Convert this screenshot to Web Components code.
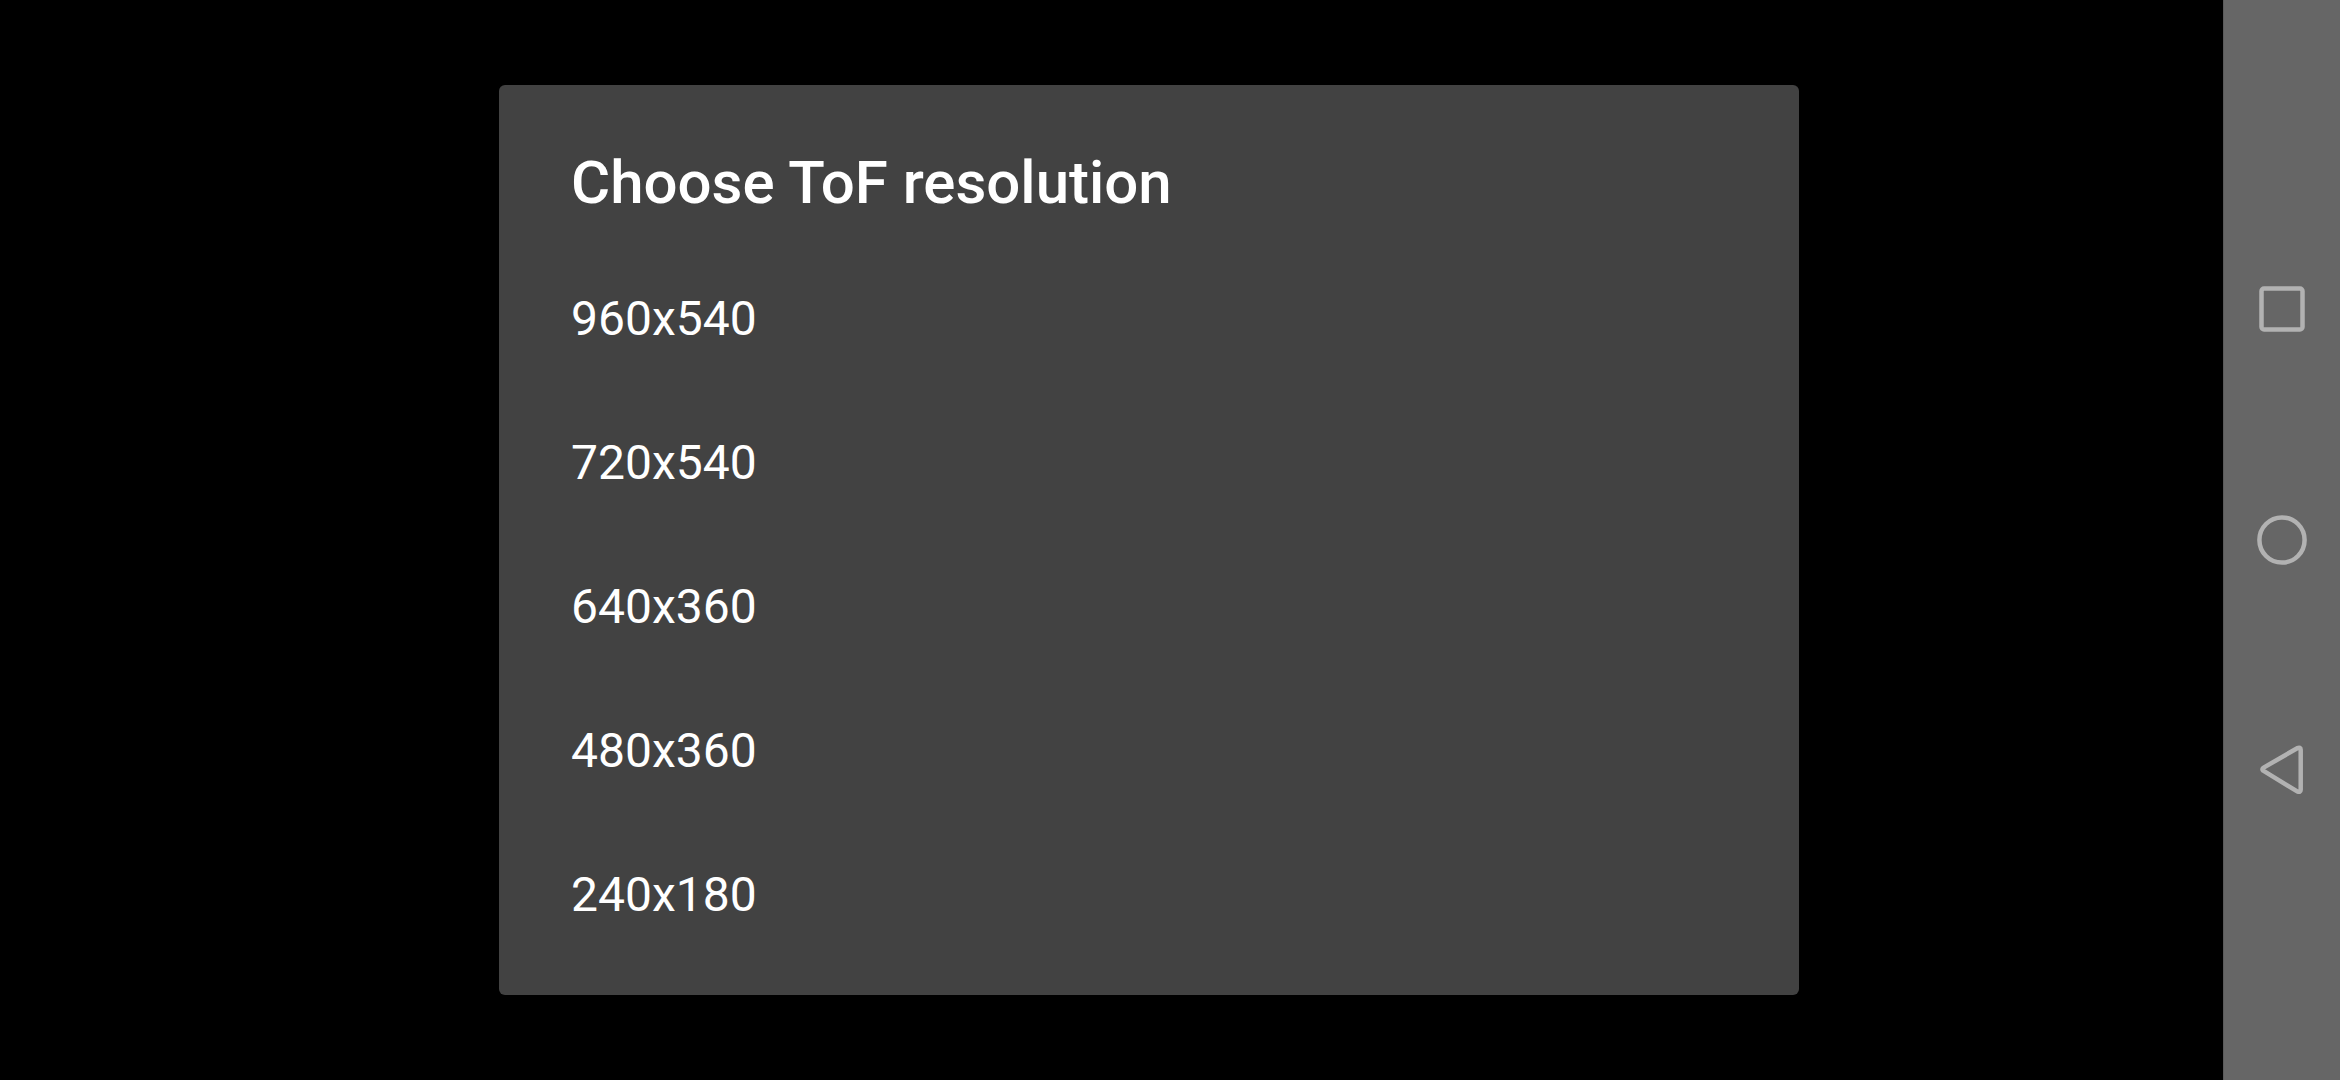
<!DOCTYPE html>
<html lang="en">
<head>
<meta charset="utf-8">
<meta name="viewport" content="width=device-width, initial-scale=1">
<title>Choose ToF resolution</title>
<style>
  body {
    margin: 0;
    background: #000;
    color: #fff;
    font-family: Roboto, "Noto Sans", sans-serif;
  }
</style>
</head>
<body>
<phone-screen>
  <choice-dialog heading="Choose ToF resolution">
    <choice-item>960x540</choice-item>
    <choice-item>720x540</choice-item>
    <choice-item>640x360</choice-item>
    <choice-item>480x360</choice-item>
    <choice-item>240x180</choice-item>
  </choice-dialog>
  <nav-bar slot="nav"></nav-bar>
</phone-screen>

<script>
class PhoneScreen extends HTMLElement {
  constructor() {
    super();
    this.attachShadow({ mode: "open" });
  }

  connectedCallback() {
    this.shadowRoot.innerHTML = `
      <style>
        :host {
          display: flex;
          min-height: 100vh;
        }

        main {
          flex: 1;
          display: flex;
          align-items: center;
          justify-content: center;
          padding-left: 75px;
        }
      </style>

      <main><slot></slot></main>
      <slot name="nav"></slot>
    `;
  }
}

customElements.define("phone-screen", PhoneScreen);

class ChoiceDialog extends HTMLElement {
  constructor() {
    super();
    this.attachShadow({ mode: "open" });
  }

  connectedCallback() {
    this.shadowRoot.innerHTML = `
      <style>
        :host {
          display: block;
          width: 100%;
          max-width: 1300px;
        }

        section {
          padding: 58px 0 28px;
          background: #424242;
          border-radius: 6px;
        }

        h1 {
          margin: 0 0 24px;
          padding: 0 72px;
          font-size: 60px;
          font-weight: 500;
          line-height: 80px;
        }
      </style>

      <section role="dialog" aria-labelledby="title">
        <h1 id="title">${this.getAttribute("heading")}</h1>
        <slot></slot>
      </section>
    `;
  }
}

customElements.define("choice-dialog", ChoiceDialog);

class ChoiceItem extends HTMLElement {
  constructor() {
    super();
    this.attachShadow({ mode: "open" });
  }

  connectedCallback() {
    this.shadowRoot.innerHTML = `
      <style>
        :host {
          display: block;
        }

        button {
          display: block;
          width: 100%;
          padding: 0 72px;
          border: none;
          background: none;
          color: inherit;
          font-family: inherit;
          font-size: 48px;
          line-height: 144px;
          text-align: left;
          cursor: pointer;
        }

        button:hover {
          background: #4d4d4d;
        }
      </style>

      <button type="button"><slot></slot></button>
    `;
  }
}

customElements.define("choice-item", ChoiceItem);

class NavBar extends HTMLElement {
  constructor() {
    super();
    this.attachShadow({ mode: "open" });
  }

  connectedCallback() {
    this.shadowRoot.innerHTML = `
      <style>
        :host {
          display: flex;
          flex-direction: column;
          justify-content: center;
          box-sizing: border-box;
          width: 117px;
          background: #666;
          border-left: 1px solid #5a5a5a;
        }

        button {
          display: flex;
          align-items: center;
          justify-content: center;
          height: 230px;
          padding: 0;
          border: none;
          background: none;
          cursor: pointer;
        }

        svg {
          width: 52px;
          height: 52px;
          fill: none;
          stroke: #b2b2b2;
          stroke-width: 4.5;
          stroke-linejoin: round;
        }
      </style>

      <button type="button" aria-label="Recent apps">
        <svg viewBox="0 0 52 52"><rect x="5.5" y="4.5" width="41" height="41" rx="2.5"/></svg>
      </button>
      <button type="button" aria-label="Home">
        <svg viewBox="0 0 52 52"><circle cx="26" cy="26" r="22.6"/></svg>
      </button>
      <button type="button" aria-label="Back">
        <svg viewBox="0 0 52 52"><path d="M41.2 4.2 7.2 23.9Q5.6 25.3 7.2 26.7L41.2 47.4Q44.7 48.8 44.7 45.8V5.8Q44.7 2.8 41.2 4.2Z"/></svg>
      </button>
    `;
  }
}

customElements.define("nav-bar", NavBar);
</script>
</body>
</html>
